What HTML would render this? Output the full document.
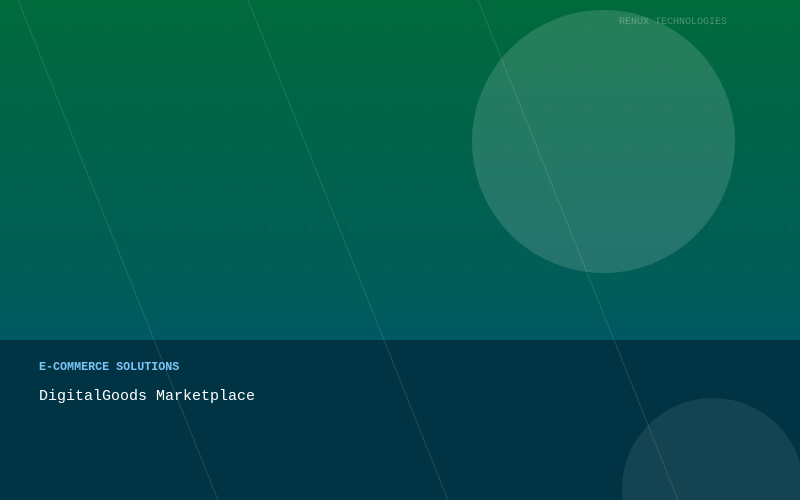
<!DOCTYPE html>
<html><head><style>
html,body{margin:0;padding:0;width:800px;height:500px;overflow:hidden;background:#003444}
body{position:relative;font-family:"Liberation Mono","DejaVu Sans Mono",monospace}
.top{position:absolute;left:0;top:0;width:800px;height:340px;background:linear-gradient(180deg,#006a3c 0px,#005c5a 300px,#005864 340px)}
.dots{position:absolute;left:0;top:0;width:800px;height:340px;background-image:radial-gradient(circle,rgba(255,255,255,0.06) 1px,transparent 1.2px);background-size:40px 40px;background-position:10px 10px}
.c1{position:absolute;left:472px;top:10px;width:263px;height:263px;border-radius:50%;background:rgba(255,255,255,0.14)}
.panel{position:absolute;left:0;top:340px;width:800px;height:160px;background:#003444;overflow:hidden}
.c2{position:absolute;left:622px;top:58px;width:182px;height:182px;border-radius:50%;background:rgba(255,255,255,0.08)}
.brand{position:absolute;left:619px;top:17px;font-size:10px;color:rgba(255,255,255,0.28)}
.lab{position:absolute;left:39px;top:360px;font-size:11.7px;font-weight:bold;color:#7cc4f5}
.tit{position:absolute;left:39px;top:388px;font-size:15px;color:#fff}
svg{position:absolute;left:0;top:0}
</style></head><body>
<div class="top"></div>
<div class="dots"></div>
<div class="c1"></div>
<div class="panel"><div class="c2"></div></div>
<svg width="800" height="500"><g stroke="rgba(255,255,255,0.12)" stroke-width="1"><line x1="18" y1="0" x2="218" y2="500"/><line x1="248" y1="0" x2="448" y2="500"/><line x1="478" y1="0" x2="678" y2="500"/></g></svg>
<div class="brand">RENUX TECHNOLOGIES</div>
<div class="lab">E-COMMERCE SOLUTIONS</div>
<div class="tit">DigitalGoods Marketplace</div>
</body></html>
